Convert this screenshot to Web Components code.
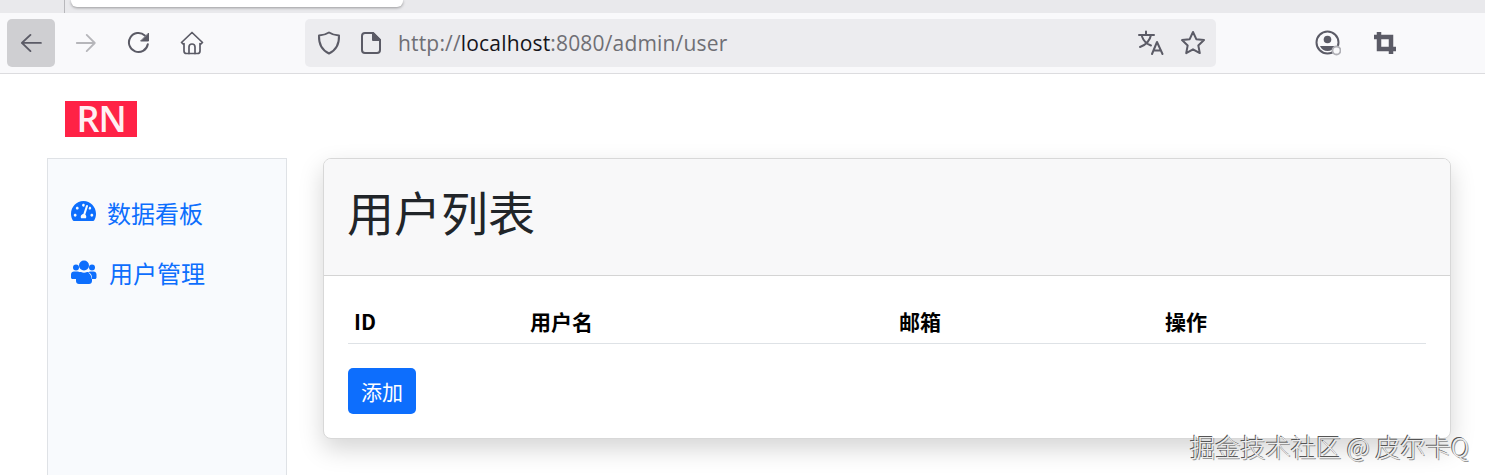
<!DOCTYPE html>
<html lang="zh"><head><meta charset="utf-8"><title>用户列表</title>
<style>
html,body{margin:0;padding:0;background:#fff;height:475px;overflow:hidden}
body{font-family:"Noto Sans CJK SC","Noto Sans",sans-serif;display:flex;flex-direction:column;position:relative}
</style></head><body>
<browser-chrome url-host="localhost"></browser-chrome>
<app-shell>
  <brand-logo slot="logo"></brand-logo>
  <side-nav slot="nav">
    <nav-link icon="gauge">数据看板</nav-link>
    <nav-link icon="users">用户管理</nav-link>
  </side-nav>
  <user-card slot="main" heading="用户列表">
    <user-table></user-table>
    <add-button>添加</add-button>
  </user-card>
</app-shell>
<water-mark>掘金技术社区 @ 皮尔卡Q</water-mark>
<script>
function def(name, html, init){
  customElements.define(name, class extends HTMLElement{
    constructor(){super();this.attachShadow({mode:'open'}).innerHTML=typeof html==='function'?html(this):html;}
    connectedCallback(){ if(init) init(this); }
  });
}
const ic='fill="none" stroke="#5b5b66" stroke-width="2" stroke-linecap="round" stroke-linejoin="round"';
def('browser-chrome',`<style>
:host{display:block;flex:none;font-family:"Open Sans","Noto Sans",sans-serif}
.tabs{height:13px;background:#e9e9ec;display:flex;padding-left:64px;box-sizing:border-box}
.sep{width:1px;height:13px;background:#b8b8bc;flex:none}
.tab{width:332px;height:7px;margin-left:6px;background:#fff;border-radius:0 0 6px 6px;box-shadow:0 1px 3px rgba(0,0,0,.35);flex:none}
.bar{height:61px;box-sizing:border-box;background:#f9f9fb;border-bottom:1px solid #dcdcdf;display:flex;align-items:center;padding:0 0 1px 7px;}
.btn{width:48px;height:48px;border-radius:5px;display:flex;align-items:center;justify-content:center;flex:none}
.btn.on{background:#cfcfd2}
.btn+.btn{margin-left:5px}
.url{margin-left:89px;width:911px;height:48px;background:#ececef;border-radius:5px;display:flex;align-items:center;padding:0 10px 0 12px;box-sizing:border-box;flex:none}
.txt{font-size:21px;color:#6f6f75;margin-left:17px;flex:1;white-space:nowrap;letter-spacing:.17px}
.txt b{font-weight:400;color:#15141a}
.url svg{flex:none}
.gap{width:16px;flex:none}
</style>
<div class="tabs"><div class="sep"></div><div class="tab"></div></div>
<div class="bar">
<div class="btn on"><svg width="24" height="24" viewBox="0 0 24 24" ${ic}><path d="M22 12H2M11 3l-9 9 9 9" transform="translate(1 0) scale(.95 .9) translate(0 1.3)"/></svg></div>
<div class="btn" style="margin-left:7px"><svg width="24" height="24" viewBox="0 0 24 24" fill="none" stroke="#b6b6ba" stroke-width="2" stroke-linecap="round" stroke-linejoin="round"><path d="M2 12h20M13 3l9 9-9 9" transform="translate(1 1.2) scale(.9)"/></svg></div>
<div class="btn"><svg width="24" height="24" viewBox="0 0 24 24" ${ic}><path d="M20.8 13.2A9.5 9.5 0 1 1 17.8 4.4"/><path d="M21.5 2.5v7.5h-7.5z" fill="#5b5b66" stroke-width="1"/></svg></div>
<div class="btn"><svg width="24" height="24" viewBox="0 0 24 24" fill="none" stroke="#5b5b66" stroke-width="1.700" stroke-linejoin="round" stroke-linecap="round"><path d="M1.500 11.500 12 1.500l10.500 10-1.800 1.700-.7-.6V20a2.500 2.500 0 0 1-2.500 2.500H6.500A2.500 2.500 0 0 1 4 20v-7.400l-.7.6z"/><path d="M9 22.500V16a3 3 0 0 1 6 0v6.500"/></svg></div>
<div class="url">
<svg width="24" height="24" viewBox="0 0 24 24" fill="none" stroke="#5b5b66" stroke-width="2" stroke-linejoin="round"><path d="M12 1.500c3 1.900 6 2.700 10 3 .3 8.500-2.500 14.500-10 18-7.500-3.500-10.300-9.500-10-18 4-.3 7-1.100 10-3z"/></svg>
<svg style="margin-left:20px" width="20" height="22" viewBox="0 0 20 22" fill="none" stroke="#5b5b66" stroke-width="2" stroke-linejoin="round"><path d="M4 1h8l7 7v10a3 3 0 0 1-3 3H4a3 3 0 0 1-3-3V4a3 3 0 0 1 3-3z"/><path d="M12 1l7 7h-7z" fill="#5b5b66"/></svg>
<span class="txt">http://<b>localhost</b>:8080/admin/user</span>
<svg width="26" height="26" viewBox="0 0 26 26" fill="none" stroke="#5b5b66" stroke-width="2" stroke-linecap="round" stroke-linejoin="round"><path d="M1 5h15M8 1.500V5M13 5c-1.200 6-5.500 10-11 12M4 6.500c1.500 4.500 5 7.500 9 9"/><path d="M14 24l5-12 5.500 12M15.700 20.500h7.300"/></svg>
<div class="gap"></div>
<svg width="26" height="26" viewBox="0 0 26 26" fill="none" stroke="#5b5b66" stroke-width="2" stroke-linejoin="round"><path d="M13 2l3.300 7.200 7.700.9-5.700 5.300 1.500 7.700L13 19.300 6.200 23.100l1.500-7.700L2 10.100l7.700-.9z"/></svg>
</div>
<div class="btn" style="margin-left:88px"><svg width="26" height="26" viewBox="0 0 26 26" fill="none" stroke="#5b5b66" stroke-width="2"><circle cx="12.500" cy="12.500" r="11"/><circle cx="12.500" cy="9.500" r="3.800" fill="#5b5b66" stroke="none"/><path d="M5 16h15c-1.500 3.500-4 5-7.500 5S6.500 19.500 5 16z" fill="#5b5b66" stroke="none"/><circle cx="21.500" cy="20.500" r="4" fill="#f9f9fb" stroke="#b0b0b6" stroke-width="1.800"/></svg></div>
<div class="btn" style="margin-left:9px"><svg width="22" height="22" viewBox="0 0 22 22" fill="none" stroke="#5b5b66" stroke-width="4.500"><path d="M5 0v17h17M0 5h17v17"/></svg></div>
</div>`);

def('app-shell',`<style>
:host{display:block;flex:1;min-height:0;overflow:hidden}
.logo{padding:27px 0 21px 65px;height:36px}
.row{display:flex;align-items:stretch;padding:0 0 40px 47px;height:317px}
.main{margin-left:36px;flex:none}
</style>
<div class="logo"><slot name="logo"></slot></div>
<div class="row"><slot name="nav"></slot><div class="main"><slot name="main"></slot></div></div>`);

def('brand-logo',`<style>
:host{display:block;width:72px;height:36px}
div{width:72px;height:36px;background:#ff2246;display:flex;align-items:center;justify-content:center}
span{color:#fff0f3;font:600 36px/36px "Open Sans",sans-serif;letter-spacing:-1px;display:block}
</style><div><span>RN</span></div>`);

def('side-nav',`<style>
:host{display:block;width:240px;box-sizing:border-box;background:#f8fafd;border:1px solid #dfe2e6;border-bottom:0;padding:23px 0 0 23px;flex:none}
</style><slot></slot>`);

const icons={
gauge:`<svg style="margin:-2px 11px 0 0" width="25" height="20" viewBox="0 32 576 448" preserveAspectRatio="none" fill="#0d6efd"><path d="M288 32C128.940 32 0 160.940 0 320c0 52.800 14.250 102.260 39.060 144.800 5.610 9.620 16.300 15.200 27.440 15.200h443c11.140 0 21.830-5.580 27.440-15.200C561.750 422.260 576 372.800 576 320c0-159.060-128.940-288-288-288zm0 64c14.710 0 26.580 10.130 30.320 23.650-1.110 2.260-2.640 4.230-3.450 6.670l-9.220 27.670c-5.130 3.490-10.970 6.010-17.640 6.010-17.670 0-32-14.330-32-32S270.330 96 288 96zM96 384c-17.670 0-32-14.330-32-32s14.330-32 32-32 32 14.330 32 32-14.330 32-32 32zm48-160c-17.670 0-32-14.330-32-32s14.330-32 32-32 32 14.330 32 32-14.330 32-32 32zm246.770-72.410l-61.330 184C343.130 347.330 352 364.540 352 384c0 11.720-3.380 22.550-8.880 32H232.880c-5.500-9.450-8.880-20.280-8.880-32 0-33.940 26.500-61.430 59.900-63.590l61.340-184.010c4.170-12.560 17.730-19.450 30.360-15.170 12.570 4.190 19.350 17.790 15.170 30.360zm14.660 57.200l15.520-46.550c3.470-1.290 7.130-2.230 11.050-2.230 17.670 0 32 14.330 32 32s-14.330 32-32 32c-11.380-.01-20.890-6.280-26.570-15.220zM480 384c-17.670 0-32-14.330-32-32s14.330-32 32-32 32 14.330 32 32-14.330 32-32 32z"/></svg>`,
users:`<svg style="margin:-1px 12px 0 0" width="26" height="24" viewBox="0 0 26 24" fill="#0d6efd"><circle cx="5" cy="7.500" r="3"/><circle cx="21" cy="7.500" r="3"/><circle cx="13" cy="5.500" r="5"/><path d="M3 11.500h3.500c.9 0 1.700.4 2.300 1-2 1.400-3.300 3.700-3.500 6.500H1.500C.7 19 0 18.300 0 17.500v-3c0-1.700 1.300-3 3-3zM23 11.500h-3.500c-.9 0-1.700.4-2.300 1 2 1.400 3.300 3.700 3.500 6.500h3.300c.8 0 1.500-.7 1.500-1.500v-3c0-1.700-1.300-3-3-3zM10 12c1 .5 2 .8 3 .8s2-.3 3-.8c2.800 0 5 2.500 5 5.500v3.500c0 1.700-1.300 3-3 3H8c-1.700 0-3-1.300-3-3v-3.500c0-3 2.200-5.500 5-5.500z"/></svg>`};
def('nav-link',el=>`<style>
:host{display:flex;align-items:center;height:60px;font-size:24px;color:#0d6efd;cursor:pointer}
</style>${icons[el.getAttribute('icon')]||''}<slot></slot>`);

def('user-card',el=>`<style>
:host{display:block;width:1128px;height:281px;box-sizing:border-box;background:#fff;border:1px solid #d8d8d8;border-radius:8px;box-shadow:0 10px 24px rgba(0,0,0,.17)}
header{height:117px;box-sizing:border-box;background:#f8f8f9;border-bottom:1px solid #d4d4d4;border-radius:7px 7px 0 0;padding:0 0 0 23px;display:flex;align-items:center;font-size:47px;font-weight:400;color:#212529}
h1{all:unset;margin-top:-13px}
section{padding:24px 24px 0}
</style><header><h1>${el.getAttribute('heading')}</h1></header><section><slot></slot></section>`);

def('user-table',`<style>
:host{display:block;margin-bottom:24px}
.head{display:grid;grid-template-columns:176px 369px 266px 1fr;height:44px;box-sizing:border-box;border-bottom:1px solid #dee2e6;font-size:21px;font-weight:700;color:#000;align-items:center}
.head span{padding-left:6px;margin-top:-2px}
</style><div class="head" role="row"><span>ID</span><span>用户名</span><span>邮箱</span><span>操作</span></div>`);

def('add-button',`<style>
:host{display:inline-flex;width:68px;height:46px;align-items:center;justify-content:center;background:#0d6efd;color:#fff;font-size:21px;border-radius:5px;cursor:pointer}
</style><slot></slot>`);

def('water-mark',`<style>
:host{position:absolute;right:16px;bottom:13px;font-size:25.200px;line-height:32px;color:#eee;white-space:nowrap;text-shadow:-1px -1px 0 #555,1px 1px 0 #999;font-family:"Noto Sans CJK SC",sans-serif;font-weight:300}
</style><slot></slot>`);
</script>
</body></html>
